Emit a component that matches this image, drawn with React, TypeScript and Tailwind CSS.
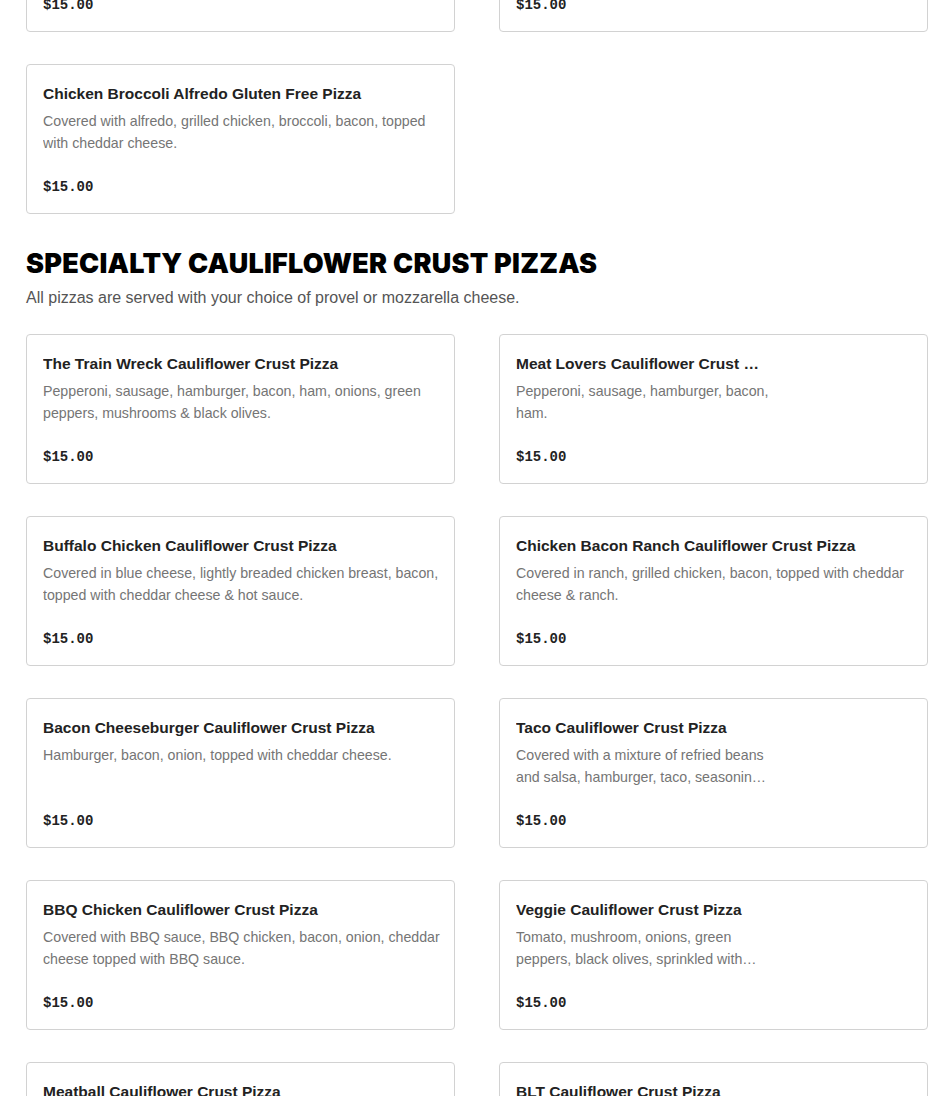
import React from 'react';

type Item = {
  name: string;
  desc: string;
  narrow?: boolean;
};

const glutenFree: Item[] = [
  { name: 'BBQ Chicken Gluten Free Pizza', desc: 'Covered with BBQ sauce, BBQ chicken, bacon, onion, cheddar cheese topped with BBQ sauce.' },
  { name: 'Veggie Gluten Free Pizza', desc: 'Tomato, mushroom, onions, green peppers, black olives.' },
  { name: 'Chicken Broccoli Alfredo Gluten Free Pizza', desc: 'Covered with alfredo, grilled chicken, broccoli, bacon, topped with cheddar cheese.' },
];

const cauliflower: Item[] = [
  { name: 'The Train Wreck Cauliflower Crust Pizza', desc: 'Pepperoni, sausage, hamburger, bacon, ham, onions, green peppers, mushrooms & black olives.' },
  { name: 'Meat Lovers Cauliflower Crust Pizza', desc: 'Pepperoni, sausage, hamburger, bacon, ham.', narrow: true },
  { name: 'Buffalo Chicken Cauliflower Crust Pizza', desc: 'Covered in blue cheese, lightly breaded chicken breast, bacon, topped with cheddar cheese & hot sauce.' },
  { name: 'Chicken Bacon Ranch Cauliflower Crust Pizza', desc: 'Covered in ranch, grilled chicken, bacon, topped with cheddar cheese & ranch.' },
  { name: 'Bacon Cheeseburger Cauliflower Crust Pizza', desc: 'Hamburger, bacon, onion, topped with cheddar cheese.' },
  { name: 'Taco Cauliflower Crust Pizza', desc: 'Covered with a mixture of refried beans and salsa, hamburger, taco, seasoning, cheddar cheese, lettuce & tomato.', narrow: true },
  { name: 'BBQ Chicken Cauliflower Crust Pizza', desc: 'Covered with BBQ sauce, BBQ chicken, bacon, onion, cheddar cheese topped with BBQ sauce.' },
  { name: 'Veggie Cauliflower Crust Pizza', desc: 'Tomato, mushroom, onions, green peppers, black olives, sprinkled with parmesan cheese.', narrow: true },
  { name: 'Meatball Cauliflower Crust Pizza', desc: 'Meatballs, marinara, provel cheese.' },
  { name: 'BLT Cauliflower Crust Pizza', desc: 'Bacon, lettuce, tomato, mayo.', narrow: true },
];

const Card = ({ item }: { item: Item }) => (
  <div className="h-[150px] flex flex-col border border-[#d2d2d2] rounded-[4px] bg-white pl-4 pr-[10px] pt-[17px] pb-[15px]">
    <h3
      className={`text-[15.5px] leading-6 font-semibold text-[#222] truncate ${item.narrow ? 'max-w-[246px]' : ''}`}
    >
      {item.name}
    </h3>
    <p
      className={`text-[14.2px] leading-[22px] text-[#757575] mt-[4px] line-clamp-2 ${item.narrow ? 'max-w-[256px]' : ''}`}
    >
      {item.desc}
    </p>
    <p className="mt-auto text-[14px] leading-[22px] font-bold text-[#222] font-['Liberation_Mono',monospace]">$15.00</p>
  </div>
);

export default function App() {
  return (
    <main className="bg-white min-h-screen overflow-hidden font-['Liberation_Sans',Arial,sans-serif]">
      <div className="pl-[26px] pr-[22px]">
        {/* Gluten free section (scrolled) */}
        <div className="grid grid-cols-2 gap-x-[44px] gap-y-8 -mt-[118px]">
          {glutenFree.map((item, i) => (
            <Card key={i} item={item} />
          ))}
        </div>

        {/* Specialty cauliflower crust */}
        <section className="pt-[33px]">
          <h2 className="font-['Inter',sans-serif] font-black text-[27px] leading-[34px] tracking-[0.25px] text-black uppercase">
            Specialty Cauliflower Crust Pizzas
          </h2>
          <p className="text-[16px] leading-6 text-[#555] mt-[5px]">
            All pizzas are served with your choice of provel or mozzarella cheese.
          </p>
          <div className="grid grid-cols-2 gap-x-[44px] gap-y-8 mt-6">
            {cauliflower.map((item, i) => (
              <Card key={i} item={item} />
            ))}
          </div>
        </section>
      </div>
    </main>
  );
}
